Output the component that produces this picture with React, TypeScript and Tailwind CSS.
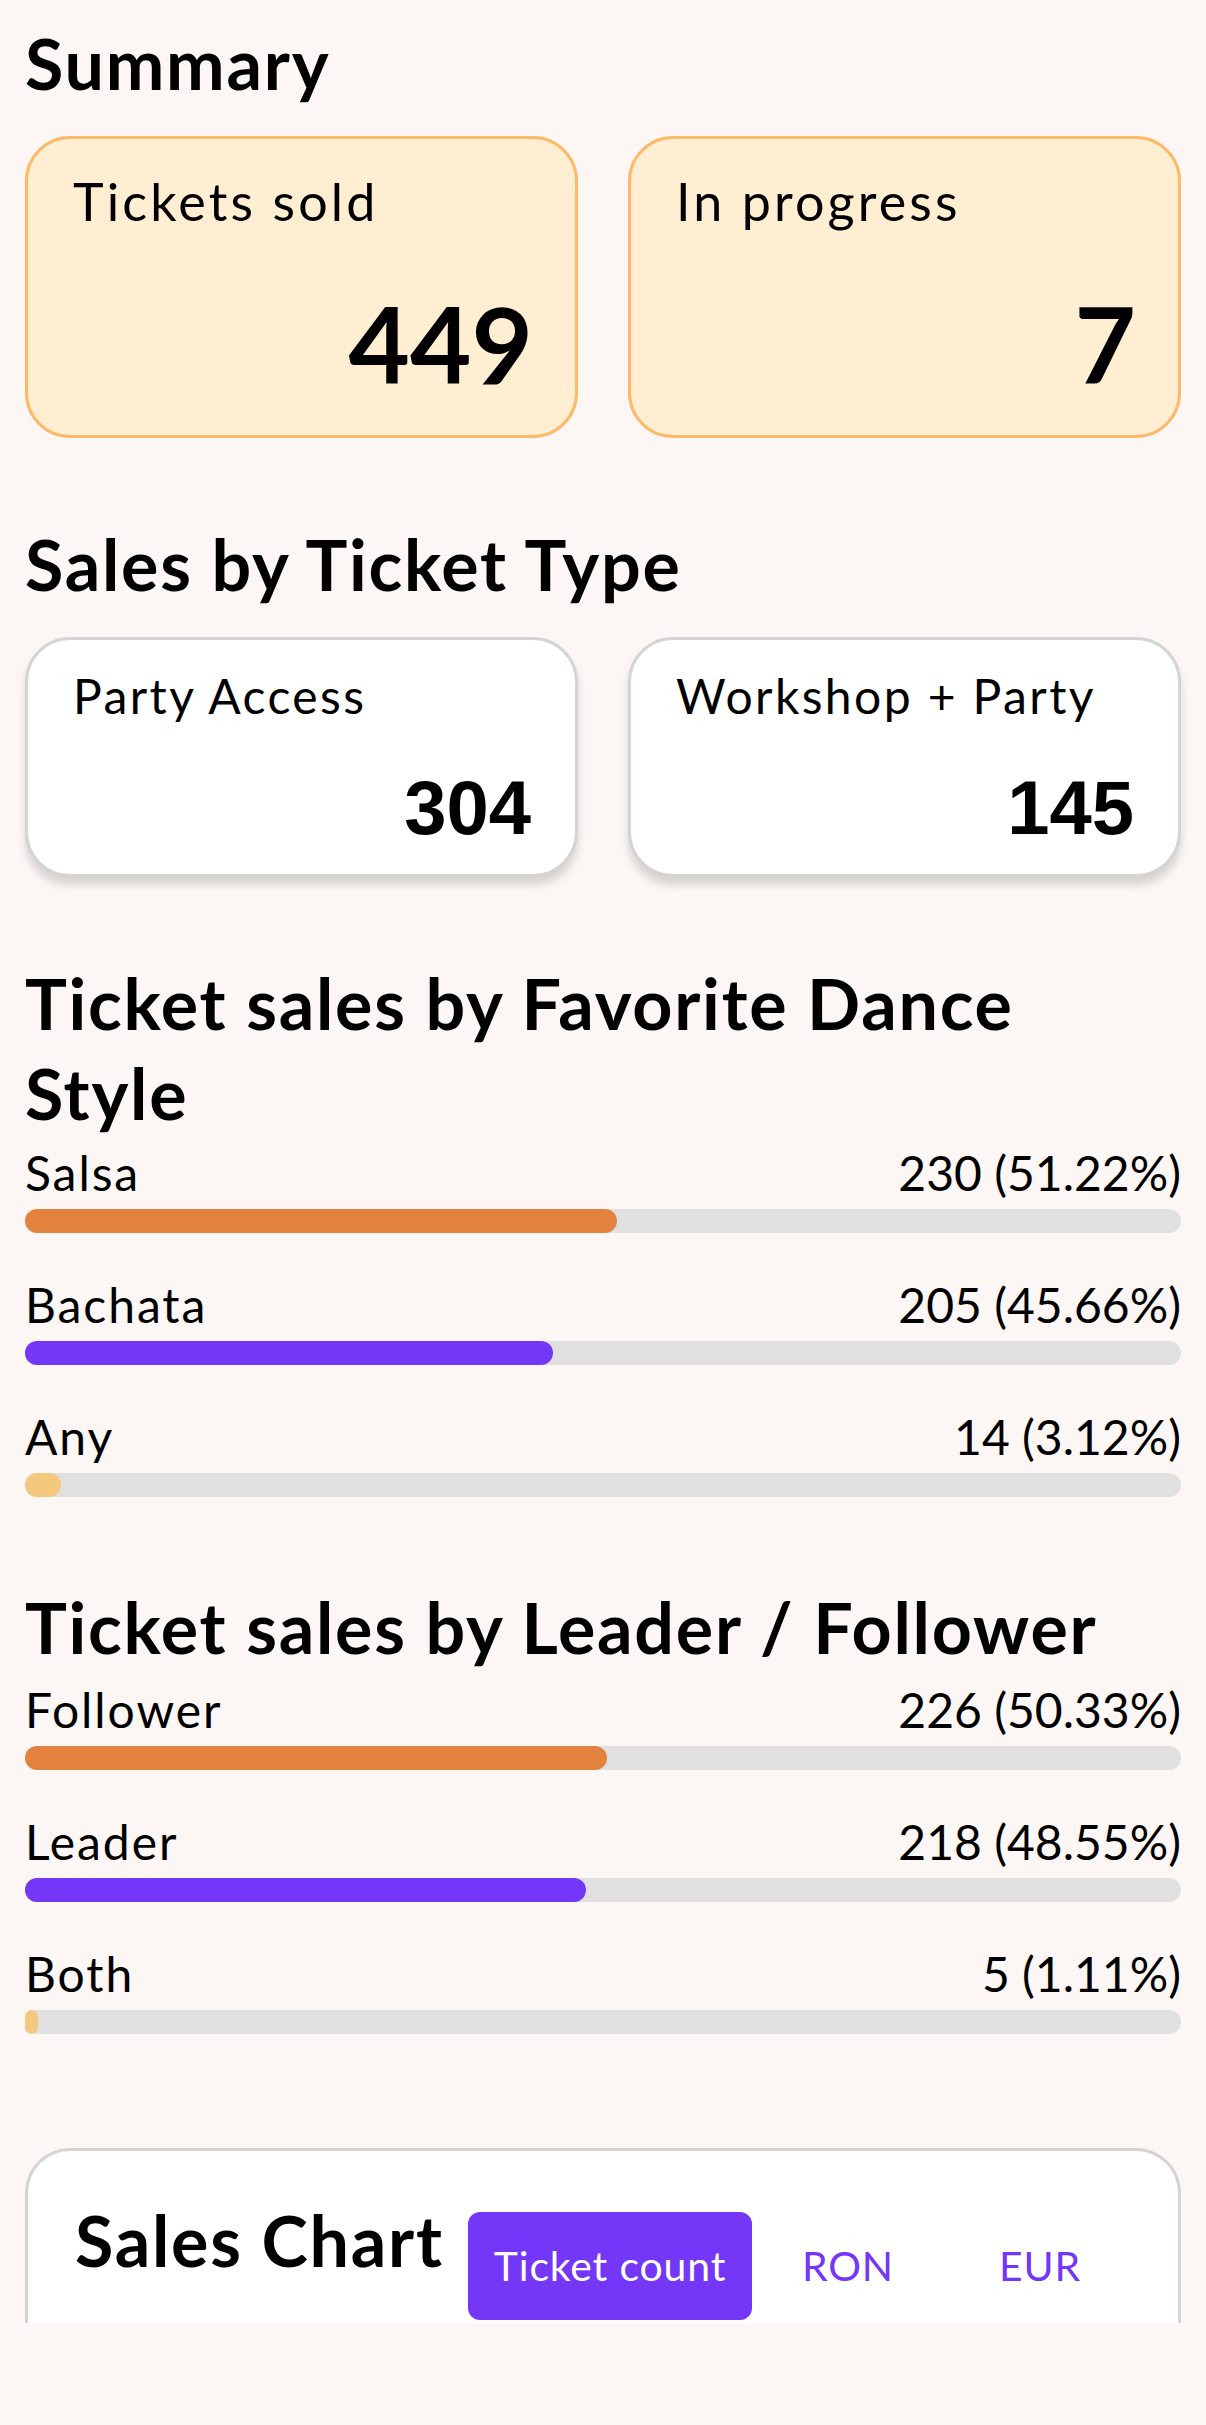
import React from "react";

type Row = { label: string; count: number; pct: string; color: string };

const dance: Row[] = [
  { label: "Salsa", count: 230, pct: "51.22", color: "bg-[#e3823e]" },
  { label: "Bachata", count: 205, pct: "45.66", color: "bg-[#7436f7]" },
  { label: "Any", count: 14, pct: "3.12", color: "bg-[#f4c97f]" },
];

const roles: Row[] = [
  { label: "Follower", count: 226, pct: "50.33", color: "bg-[#e3823e]" },
  { label: "Leader", count: 218, pct: "48.55", color: "bg-[#7436f7]" },
  { label: "Both", count: 5, pct: "1.11", color: "bg-[#f4c97f]" },
];

function Heading({ children, className = "" }: { children: React.ReactNode; className?: string }) {
  return (
    <h2 className={`text-[70px] font-bold leading-[90px] tracking-[0.025em] text-black ${className}`}>
      {children}
    </h2>
  );
}

function Bars({ rows, className = "" }: { rows: Row[]; className?: string }) {
  return (
    <div className={`flex flex-col gap-[43px] ${className}`}>
      {rows.map((r) => (
        <div key={r.label} className="flex flex-col">
          <div className="flex justify-between text-[48px] leading-[58px] text-black">
            <span className="tracking-[0.04em]">{r.label}</span>
            <span>
              {r.count} ({r.pct}%)
            </span>
          </div>
          <div className="mt-[7px] h-[24px] rounded-full bg-[#e0e0e0]">
            <div className={`h-full rounded-full ${r.color}`} style={{ width: `${r.pct}%` }} />
          </div>
        </div>
      ))}
    </div>
  );
}

function YellowCard({ label, value }: { label: string; value: string }) {
  return (
    <div className="flex h-[302px] flex-col justify-between rounded-[45px] border-[3px] border-[#fdb967] bg-[#ffeed1] pb-[39px] pl-[45px] pr-[42px] pt-[31px]">
      <div className="text-[52px] leading-[62px] tracking-[0.06em]">{label}</div>
      <div className="text-right text-[106px] font-bold leading-[106px]">{value}</div>
    </div>
  );
}

function WhiteCard({ label, value }: { label: string; value: string }) {
  return (
    <div className="flex h-[240px] flex-col justify-between rounded-[45px] border-[3px] border-[#d4d4d4] bg-white pb-[28px] pl-[45px] pr-[44px] pt-[27px] shadow-[0_8px_8px_rgba(0,0,0,0.15)]">
      <div className="text-[48px] leading-[58px] tracking-[0.05em]">{label}</div>
      <div className="text-right font-['Liberation_Sans',Arial,sans-serif] text-[76px] font-bold leading-[76px]">
        {value}
      </div>
    </div>
  );
}

export default function App() {
  return (
    <div className="min-h-[2425px] w-full bg-[#fcf7f4] font-[Lato,sans-serif] text-black">
      <div className="h-[2323px] overflow-hidden">
        <div className="px-[25px] pt-[18px]">
          <Heading>Summary</Heading>
          <div className="mt-[28px] grid grid-cols-2 gap-[50px]">
            <YellowCard label="Tickets sold" value="449" />
            <YellowCard label="In progress" value="7" />
          </div>

          <Heading className="mt-[81px]">Sales by Ticket Type</Heading>
          <div className="mt-[28px] grid grid-cols-2 gap-[50px]">
            <WhiteCard label="Party Access" value="304" />
            <WhiteCard label="Workshop + Party" value="145" />
          </div>

          <Heading className="mt-[81px]">Ticket sales by Favorite Dance Style</Heading>
          <Bars rows={dance} className="mt-[6px]" />

          <Heading className="mt-[85px]">Ticket sales by Leader / Follower</Heading>
          <Bars rows={roles} className="mt-[9px]" />

          <div className="mt-[114px] h-[400px] rounded-t-[45px] border-[3px] border-b-0 border-[#d4d4d4] bg-white pl-[47px] pr-[42px] pt-[44px]">
            <div className="flex items-start justify-between">
              <h2 className="text-[70px] font-bold leading-[90px] tracking-[0.025em]">Sales Chart</h2>
              <div className="mt-[17px] flex">
                <button className="flex h-[108px] w-[284px] items-center justify-center rounded-[12px] bg-[#7436f7] text-[41px] tracking-[0.02em] text-white">
                  Ticket count
                </button>
                <button className="flex h-[108px] w-[192px] items-center justify-center text-[41px] tracking-[0.02em] text-[#7436f7]">
                  RON
                </button>
                <button className="flex h-[108px] w-[192px] items-center justify-center text-[41px] tracking-[0.02em] text-[#7436f7]">
                  EUR
                </button>
              </div>
            </div>
          </div>
        </div>
      </div>
    </div>
  );
}
